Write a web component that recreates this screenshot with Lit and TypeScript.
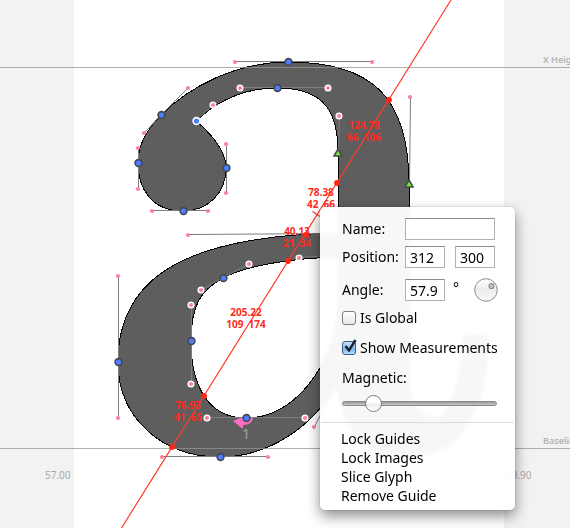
import { LitElement, html, css, svg } from "lit";
import { customElement, state } from "lit/decorators.js";

type Pt = [number, number];

/** A handle line: on-curve point first, control point second. */
const HANDLES: [Pt, Pt, boolean][] = [
  [[288, 62], [235, 62], false],
  [[288, 62], [372, 62], false],
  [[277, 88], [240, 88], true],
  [[277, 88], [328, 88], true],
  [[338, 153], [339, 116], true],
  [[409, 184], [410, 97], false],
  [[196, 121], [213, 105], true],
  [[161, 115], [188, 88], false],
  [[161, 115], [144, 133], false],
  [[138, 163], [138, 148], false],
  [[138, 163], [138, 189], false],
  [[183, 211], [152, 211], false],
  [[183, 211], [208, 211], false],
  [[226, 168], [226, 144], false],
  [[226, 168], [226, 193], false],
  [[338, 234], [188, 235], false],
  [[118, 362], [118, 276], false],
  [[118, 362], [118, 418], false],
  [[220, 457], [162, 457], false],
  [[220, 457], [268, 457], false],
  [[337, 383], [314, 427], false],
  [[246, 418], [207, 418], true],
  [[246, 418], [305, 418], true],
  [[191, 341], [191, 305], true],
  [[191, 341], [191, 384], true],
  [[223, 278], [201, 290], true],
  [[223, 278], [249, 264], true],
  [[338, 256], [299, 258], true],
];

const NODES: Pt[] = [
  [288, 62], [277, 88], [161, 115], [138, 163], [183, 211], [226, 168],
  [118, 362], [220, 457], [246, 418], [191, 341], [223, 278], [337, 383],
];

const TANGENTS: Pt[] = [[338, 153], [409, 184]];

const CROSSINGS: Pt[] = [[389, 100], [337, 183], [306, 235], [288, 261], [204, 396], [172, 447]];

/** Measurements: centre x, first baseline, length, dx, dy. */
const MEASURES: [number, number, string, string, string][] = [
  [364, 129, "124.78", "66", "106"],
  [321, 196, "78.38", "42", "66"],
  [297, 235, "40.13", "21", "34"],
  [246, 316, "205.22", "109", "174"],
  [188, 409, "76.93", "41", "65"],
];

const GLYPH =
  "M288 62 C372 62 409 97 409 184 L409 380 C409 405 420 418 434 418 C452 418 462 380 464 335 " +
  "L489 335 C486 410 462 457 404 457 C365 457 343 430 337 383 C314 427 268 457 220 457 " +
  "C162 457 118 418 118 362 C118 276 188 236 338 233 L338 153 C338 116 328 88 277 88 " +
  "C240 88 213 105 196 121 C196 121 226 144 226 168 C226 193 208 211 183 211 " +
  "C152 211 138 189 138 163 C138 147 144 133 161 115 C188 88 235 62 288 62 Z " +
  "M338 257 C299 258 249 264 223 278 C201 290 191 305 191 341 C191 384 207 418 246 418 " +
  "C305 418 338 345 338 310 Z";

@customElement("glyph-canvas")
class GlyphCanvas extends LitElement {
  static styles = css`
    :host { display: block; overflow: hidden; background: #f2f2f2; }
    svg { display: block; width: 100%; height: 100%; }
    text { font-family: "Noto Sans", "Open Sans", sans-serif; }
    .advance { fill: #fff; }
    .glyph { fill: #5e5e5e; stroke: #000; stroke-width: 1; fill-rule: evenodd; shape-rendering: crispEdges; }
    .metric { stroke: rgba(150, 150, 150, 0.75); stroke-width: 1; }
    .handle { stroke: #7d7d7d; stroke-width: 1; }
    .control { fill: #ff8296; }
    .ring { stroke: #fff; stroke-width: 1.5; }
    .node { fill: #4d7cff; stroke: #424952; stroke-width: 1.6; }
    .corner { fill: #4d7cff; stroke: #fff; stroke-width: 1.6; }
    .tangent { fill: #78e83c; stroke: #474f45; stroke-width: 1.6; }
    .start { fill: #ff6ec7; }
    .index { fill: #a0a0a0; font-size: 15px; text-anchor: middle; }
    .guide { stroke: #ff3b2c; stroke-width: 1.2; fill: none; }
    .crossing { fill: #ff2614; }
    .measure { fill: #ff2a1c; font-size: 10px; font-weight: 700; text-anchor: middle; white-space: pre; }
    .label { fill: #aaa; font-size: 10px; }
    .strong { font-weight: 600; fill: #b4b4b4; font-size: 9px; }
  `;

  render() {
    return html`<svg role="img" aria-label="Glyph outline with a measuring guide">
      <rect class="advance" x="74" y="0" width="430" height="100%"></rect>
      <path class="glyph" d=${GLYPH}></path>
      <line class="metric" x1="0" y1="67.5" x2="100%" y2="67.5"></line>
      <line class="metric" x1="0" y1="448.5" x2="100%" y2="448.5"></line>
      <path class="start" d="M233 421 L240 418 L253 418 Q252 425 243 425 L243 429 Z"></path>
      <text class="index" x="246" y="439">1</text>
      ${HANDLES.map(([a, b]) => svg`<line class="handle" x1=${a[0] + 0.5} y1=${a[1] - 0.5} x2=${b[0] + 0.5} y2=${b[1] - 0.5}></line>`)}
      ${HANDLES.map(([, b, ring]) => svg`<circle class=${ring ? "control ring" : "control"} cx=${b[0]} cy=${b[1]} r=${ring ? 2.8 : 2.1}></circle>`)}
      ${NODES.map((p) => svg`<circle class="node" cx=${p[0] + 0.5} cy=${p[1]} r="3.4"></circle>`)}
      <circle class="corner" cx="196.5" cy="121" r="3.4"></circle>
      ${TANGENTS.map(([x, y]) => svg`<path class="tangent" d=${`M${x} ${y - 4} L${x + 4} ${y + 3} H${x - 4} Z`}></path>`)}
      <path class="guide" d="M451 0 L121.500 528 M312.500 211.500 L320 216.500"></path>
      ${CROSSINGS.map((p) => svg`<circle class="crossing" cx=${p[0]} cy=${p[1]} r="2.9"></circle>`)}
      ${MEASURES.map(
        ([x, y, len, dx, dy]) => svg`
          <text class="measure" x=${x} y=${y}>${len}</text>
          <text class="measure" x=${x} y=${y + 12}>${dx}\u00a0\u00a0${dy}</text>`
      )}
      <text class="label strong" x="543" y="63">X Height</text>
      <text class="label strong" x="543" y="444">Baseline</text>
      <text class="label" x="45" y="479">57.00</text>
      <text class="label" x="506" y="479">59.90</text>
    </svg>`;
  }
}

@customElement("guide-panel")
class GuidePanel extends LitElement {
  static styles = css`
    :host {
      display: block;
      box-sizing: border-box;
      width: 195px;
      border-radius: 5px;
      background: rgba(255, 255, 255, 0.95);
      backdrop-filter: blur(2px);
      box-shadow: 0 0 1px rgba(0, 0, 0, 0.6), 0 6px 14px rgba(0, 0, 0, 0.45);
      color: #000;
      font: 14px/20px "Noto Sans", "Open Sans", sans-serif;
    }
    .form { padding: 11px 16px 9px 22px; }
    .row { display: grid; grid-template-columns: 63px 1fr; align-items: center; margin-bottom: 6px; }
    .pair { display: flex; align-items: center; gap: 10px; }
    .text {
      box-sizing: border-box;
      flex: none;
      width: 40px;
      height: 22px;
      margin: 0;
      padding: 0 4px;
      border: 1px solid #b0b0b0;
      border-top-color: #8c8c8c;
      border-radius: 0;
      background: #fff;
      font: inherit;
      outline: none;
    }
    .wide { width: 90px; }
    .angle { margin: 10px 0 1px; height: 24px; }
    .angle .pair { gap: 8px; }
    .degree { align-self: flex-start; width: 13px; }
    .dial { flex: none; width: 24px; height: 24px; margin: 0; padding: 0; border: 0; background: none; }
    .dial svg { display: block; }
    .check { display: flex; align-items: center; gap: 4px; height: 30px; white-space: nowrap; }
    .box {
      appearance: none;
      box-sizing: border-box;
      width: 14px;
      height: 14px;
      margin: 0;
      border: 1px solid #7c7c7c;
      border-radius: 3px;
      background: linear-gradient(#fff, #e8e8e8);
    }
    .box:checked { border-color: #3c5c8c; background: linear-gradient(#cfe3f8, #7fb6ee 60%, #b8e2ff); }
    .tick { position: relative; display: flex; }
    .mark { position: absolute; left: 2px; bottom: 2px; width: 13px; height: 14px; fill: none; stroke: #14202e; stroke-width: 2.4; pointer-events: none; }
    .magnetic { display: block; line-height: 30px; }
    .slider { appearance: none; display: block; width: 155px; height: 20px; margin: 0; background: none; }
    .slider::-webkit-slider-runnable-track {
      box-sizing: border-box;
      height: 5px;
      border: 1px solid #888;
      border-radius: 3px;
      background: linear-gradient(#999, #c8c8c8);
    }
    .slider::-webkit-slider-thumb {
      appearance: none;
      box-sizing: border-box;
      width: 17px;
      height: 17px;
      margin-top: -7px;
      border: 1px solid #7d7d7d;
      border-radius: 50%;
      background: linear-gradient(#fff 45%, #ededed 55%, #fff);
    }
    .menu { display: flex; flex-direction: column; margin: 0 1px; padding: 6px 0 5px; border-top: 1px solid #dcdce0; }
    .item { height: 19px; padding: 0 20px; border: 0; background: none; color: inherit; font: inherit; line-height: 19px; text-align: left; }
  `;

  @state() private shown = true;

  render() {
    return html`
      <div class="form">
        <div class="row">
          <label for="name">Name:</label>
          <input class="text wide" id="name" type="text" />
        </div>
        <div class="row">
          <label for="x">Position:</label>
          <div class="pair">
            <input class="text" id="x" type="text" value="312" />
            <input class="text" type="text" aria-label="Position y" value="300" />
          </div>
        </div>
        <div class="row angle">
          <label for="angle">Angle:</label>
          <div class="pair">
            <input class="text" id="angle" type="text" value="57.9" />
            <span class="degree">°</span>
            <button class="dial" type="button" aria-label="Angle dial">
              <svg width="24" height="24" viewBox="0 0 24 24">
                <defs>
                  <linearGradient id="face" x1="0" y1="0" x2="0" y2="1">
                    <stop offset="0" stop-color="#fff"></stop>
                    <stop offset="0.5" stop-color="#ececec"></stop>
                    <stop offset="1" stop-color="#fafafa"></stop>
                  </linearGradient>
                </defs>
                <circle cx="12" cy="12" r="11.300" fill="url(#face)" stroke="#8e8e8e" stroke-width="1"></circle>
                <circle cx="17.500" cy="8" r="2.500" fill="#c4c4c4" stroke="#8c8c8c" stroke-width="1.200"></circle>
              </svg>
            </button>
          </div>
        </div>
        <label class="check"><input class="box" type="checkbox" />Is Global</label>
        <label class="check">
          <span class="tick">
            <input class="box" type="checkbox" .checked=${this.shown}
              @change=${(e: Event) => (this.shown = (e.target as HTMLInputElement).checked)} />
            ${this.shown ? html`<svg class="mark" viewBox="0 0 13 14"><path d="M1.500 7 L5 11.500 L11.500 1"></path></svg>` : ""}
          </span>Show Measurements
        </label>
        <label class="magnetic" for="magnetic">Magnetic:</label>
        <input class="slider" id="magnetic" type="range" min="0" max="100" value="16" />
      </div>
      <div class="menu">
        ${["Lock Guides", "Lock Images", "Slice Glyph", "Remove Guide"].map(
          (t) => html`<button class="item" type="button">${t}</button>`
        )}
      </div>
    `;
  }
}

@customElement("app-root")
class AppRoot extends LitElement {
  static styles = css`
    :host { display: grid; position: relative; min-height: 100vh; overflow: hidden; }
    .panel { position: absolute; left: 320px; top: 207px; }
  `;

  render() {
    return html`
      <glyph-canvas></glyph-canvas>
      <guide-panel class="panel"></guide-panel>
    `;
  }
}
